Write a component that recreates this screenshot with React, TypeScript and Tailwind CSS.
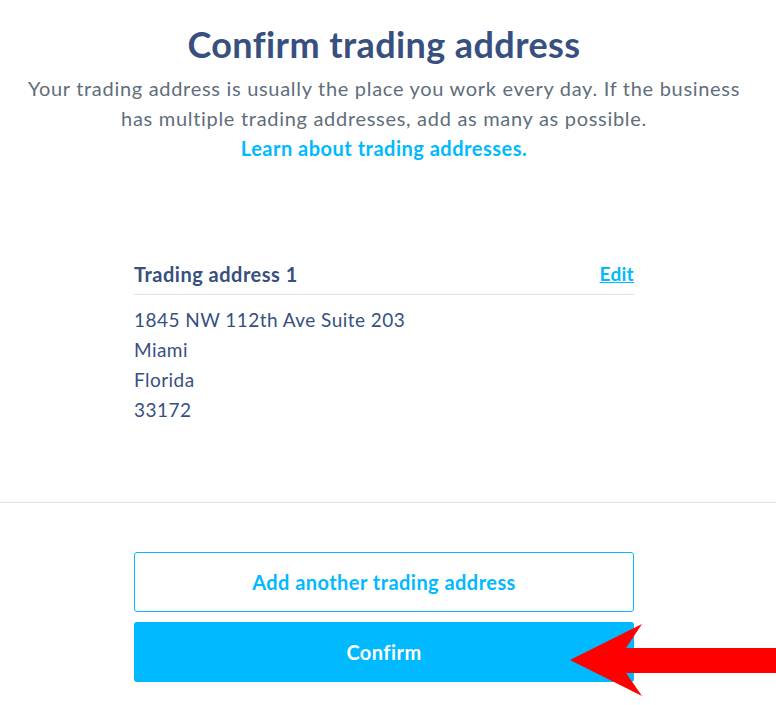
export default function App() {
  return (
    <div className="relative min-h-screen bg-white font-['Lato',sans-serif] overflow-hidden">
      <div className="w-[768px]">
        <div className="pt-[23px] text-center">
          <h1 className="text-[36px] leading-[42px] font-bold tracking-[0.4px] text-[#37507f]">Confirm trading address</h1>
          <p className="mt-[8px] text-[20px] leading-[30px] tracking-[0.7px] text-[#5f6e7b]">
            Your trading address is usually the place you work every day. If the business
            <br />
            has multiple trading addresses, add as many as possible.
          </p>
          <a href="#" className="block text-[20px] leading-[30px] font-bold tracking-[0.5px] text-[#00b9ff]">
            Learn about trading addresses.
          </a>
        </div>

        <div className="w-[500px] mx-auto mt-[99px]">
          <div className="flex items-center justify-between pb-[8px] border-b border-[#e3e3e3]">
            <span className="text-[20px] leading-[24px] font-bold tracking-[0.5px] text-[#37507f]">Trading address 1</span>
            <a href="#" className="text-[19px] leading-[24px] font-bold tracking-[0.3px] text-[#00b9ff] underline">Edit</a>
          </div>
          <div className="mt-[10px] text-[19px] leading-[30px] tracking-[0.45px] text-[#37507f]">
            <div>1845 NW 112th Ave Suite 203</div>
            <div>Miami</div>
            <div>Florida</div>
            <div>33172</div>
          </div>
        </div>
      </div>

      <div className="mt-[77px] border-t border-[#e3e3e3]" />

      <div className="w-[768px]">
        <div className="w-[500px] mx-auto mt-[49px] flex flex-col gap-[10px]">
          <button className="h-[60px] rounded-[3px] border border-[#00b9ff] bg-white text-[20px] font-bold tracking-[0.45px] text-[#00b9ff]">
            Add another trading address
          </button>
          <button className="h-[60px] rounded-[3px] bg-[#00b9ff] text-[20px] font-bold tracking-[0.45px] text-white">
            Confirm
          </button>
        </div>
      </div>

      <svg className="absolute left-0 top-0 pointer-events-none" width="776" height="705" viewBox="0 0 776 705">
        <polygon points="570,660 642,624 626,648 776,648 776,673 626,673 642,696" fill="#ff0000" />
      </svg>
    </div>
  )
}
